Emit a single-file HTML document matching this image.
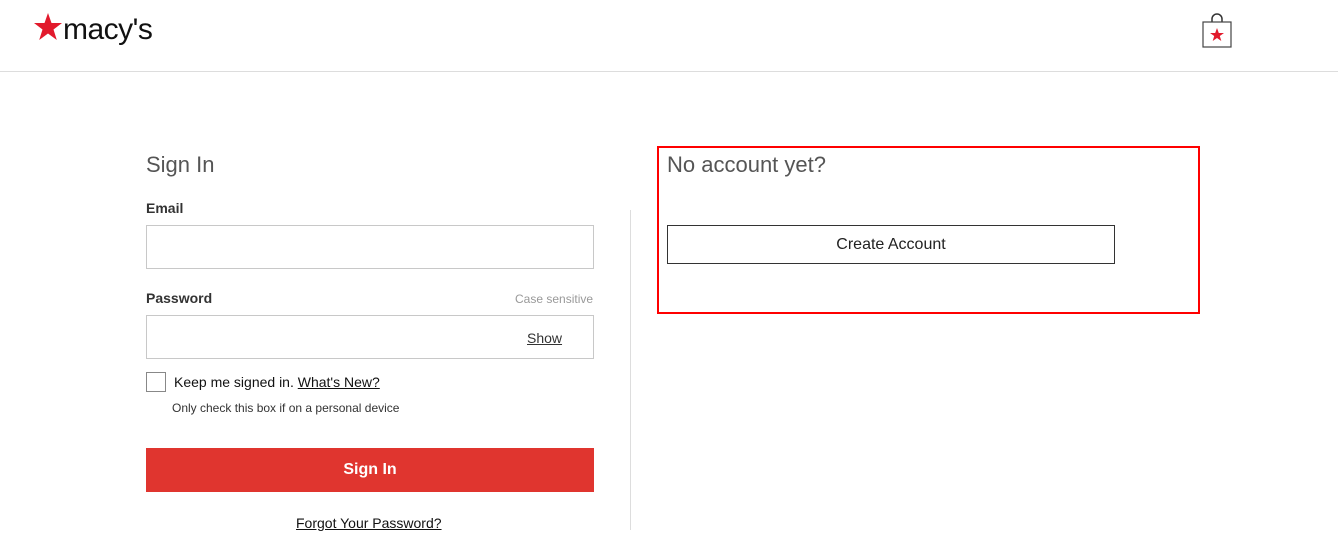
<!DOCTYPE html>
<html><head><style>
body{margin:0;width:1338px;height:540px;background:#fff;font-family:"Liberation Sans",sans-serif;color:#333;position:relative;overflow:hidden}
.a{position:absolute}
.inp{position:absolute;border:1px solid #c8c8c8;background:#fff;box-sizing:border-box}
</style></head><body>
<div class="a" style="left:0;top:71px;width:1338px;height:1px;background:#ddd"></div>
<svg class="a" style="left:33px;top:13px" width="30" height="28" viewBox="0 0 30 28"><polygon fill="#e21a2c" points="15,0 18.5,10 29,10 20.5,16.5 23.8,27 15,20.5 6.2,27 9.5,16.5 1,10 11.5,10"/></svg>
<div class="a" style="left:63px;top:13px;font-size:30px;color:#111;letter-spacing:-0.5px">macy's</div>
<svg class="a" style="left:1202px;top:13px" width="30" height="36" viewBox="0 0 30 36"><path d="M10 9 V6 a5 5 0 0 1 10 0 V9" fill="none" stroke="#333" stroke-width="1.5"/><rect x="1" y="9" width="28" height="25" fill="#fff" stroke="#444" stroke-width="1.2"/><polygon fill="#e21a2c" points="15,15 16.8,20 22,20 17.8,23 19.3,28 15,25 10.7,28 12.2,23 8,20 13.2,20"/></svg>
<div class="a" style="left:146px;top:152px;font-size:22px;color:#555">Sign In</div>
<div class="a" style="left:146px;top:200px;font-size:14px;font-weight:bold">Email</div>
<div class="inp" style="left:146px;top:225px;width:448px;height:44px"></div>
<div class="a" style="left:146px;top:290px;font-size:14px;font-weight:bold">Password</div>
<div class="a" style="left:515px;top:292px;font-size:12px;color:#999">Case sensitive</div>
<div class="inp" style="left:146px;top:315px;width:448px;height:44px"></div>
<div class="a" style="left:527px;top:330px;font-size:14px;text-decoration:underline">Show</div>
<div class="inp" style="left:146px;top:372px;width:20px;height:20px;border-color:#888"></div>
<div class="a" style="left:174px;top:374px;font-size:14px;color:#111">Keep me signed in. <u>What's New?</u></div>
<div class="a" style="left:172px;top:401px;font-size:12px;color:#333">Only check this box if on a personal device</div>
<div class="a" style="left:146px;top:448px;width:448px;height:44px;background:#e0352f;color:#fff;font-size:16px;font-weight:bold;text-align:center;line-height:44px">Sign In</div>
<div class="a" style="left:296px;top:515px;font-size:14px;color:#111;text-decoration:underline">Forgot Your Password?</div>
<div class="a" style="left:630px;top:210px;width:1px;height:320px;background:#ddd"></div>
<div class="a" style="left:657px;top:146px;width:539px;height:164px;border:2px solid #f00"></div>
<div class="a" style="left:667px;top:152px;font-size:22px;color:#555">No account yet?</div>
<div class="a" style="left:667px;top:225px;width:446px;height:37px;border:1px solid #333;text-align:center;line-height:38px;font-size:16px;color:#222">Create Account</div>
</body></html>
